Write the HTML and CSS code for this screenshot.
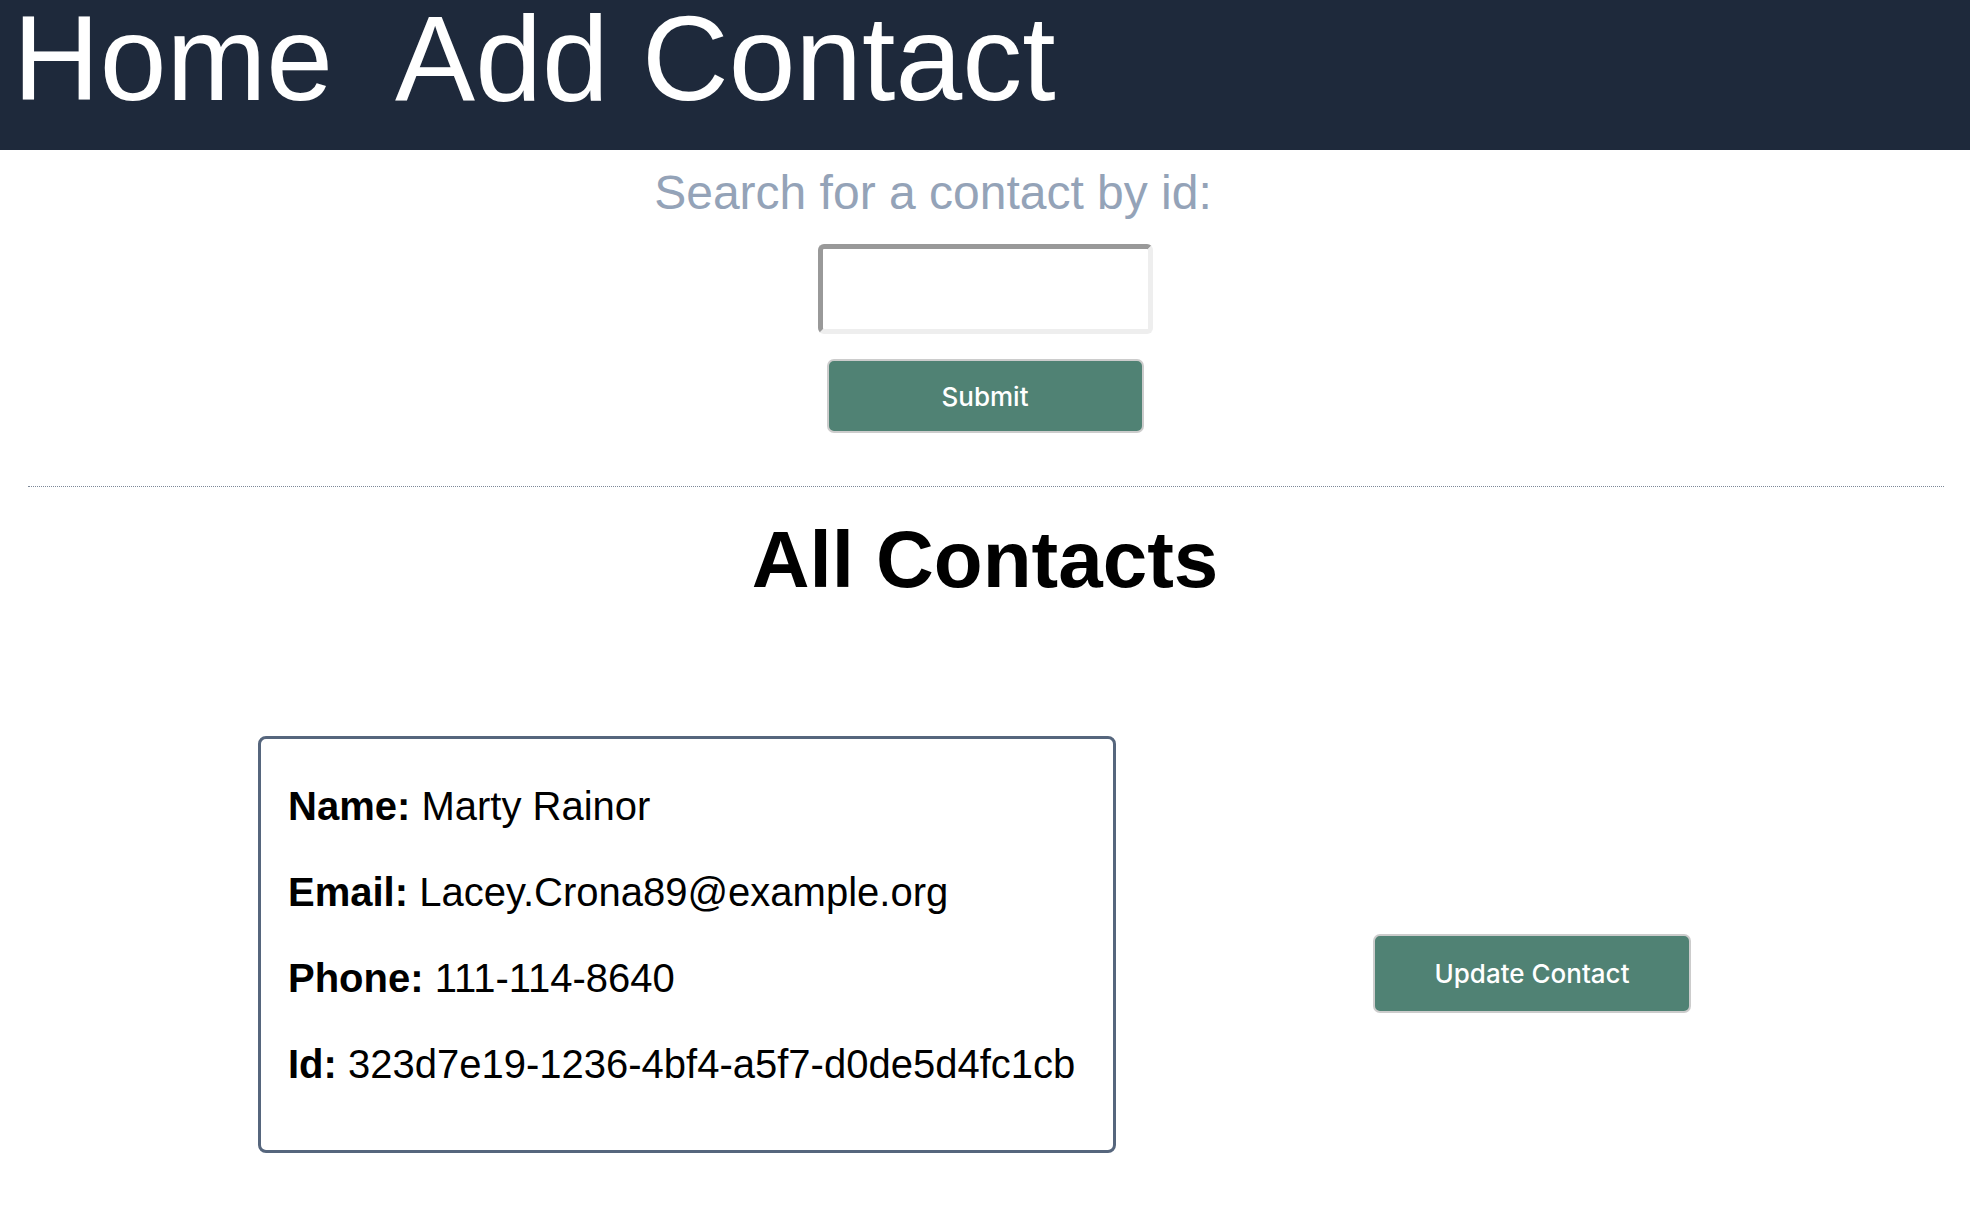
FILE: index.html
```html
<!DOCTYPE html>
<html lang="en">
<head>
<meta charset="utf-8">
<title>Contacts</title>
<link rel="stylesheet" href="styles.css">
</head>
<body>
<header class="topbar">
  <nav class="nav">
    <a class="nav-link" href="#">Home</a>
    <a class="nav-link" href="#">Add Contact</a>
  </nav>
</header>
<main class="page">
  <form class="search">
    <label class="search-label" for="contact-id">Search for a contact by id:</label>
    <input class="search-input" id="contact-id" type="text">
    <button class="btn btn-submit" type="button">Submit</button>
  </form>
  <hr class="divider">
  <h1 class="title">All Contacts</h1>
  <section class="contact-row">
    <div class="card">
      <p class="field"><b>Name:</b> Marty Rainor</p>
      <p class="field"><b>Email:</b> Lacey.Crona89@example.org</p>
      <p class="field"><b>Phone:</b> 111-114-8640</p>
      <p class="field"><b>Id:</b> 323d7e19-1236-4bf4-a5f7-d0de5d4fc1cb</p>
    </div>
    <button class="btn btn-update" type="button">Update Contact</button>
  </section>
</main>
</body>
</html>
```
FILE: styles.css
```css
* { box-sizing: border-box; }
html, body { margin: 0; padding: 0; background: #ffffff; }
body { font-family: "Liberation Sans", Arial, Helvetica, sans-serif; color: #000; }

.topbar {
  background: #1e293b;
  height: 150px;
  overflow: hidden;
}
.nav {
  display: flex;
  gap: 62px;
  padding-left: 13px;
  padding-top: 6px;
}
.nav-link {
  color: #ffffff;
  text-decoration: none;
  font-size: 120px;
  line-height: 105px;
}

.page { display: flex; flex-direction: column; }

.search {
  display: flex;
  flex-direction: column;
  align-items: center;
}
.search-label {
  margin-top: 15px;
  font-size: 48px;
  line-height: 55px;
  color: #94a3b8;
  padding-right: 104px;
}
.search-input {
  margin-top: 24px;
  width: 335px;
  height: 90px;
  border-style: solid;
  border-width: 5px;
  border-color: #999999 #eeeeee #eeeeee #999999;
  border-radius: 6px;
  background: #fff;
  outline: none;
}
.btn {
  font-family: Inter, "Noto Sans", sans-serif;
  font-weight: 500;
  color: #ffffff;
  background: #508274;
  border: 2px solid #cccccc;
  border-radius: 7px;
  font-size: 26px;
  cursor: pointer;
}
.btn-submit {
  margin-top: 25px;
  width: 317px;
  height: 74px;
}

.divider {
  margin: 53px 26px 0 28px;
  border: 0;
  border-top: 1px dotted #7d8898;
  height: 0;
}

.title {
  margin: 27px 0 0;
  font-size: 80px;
  line-height: 92px;
  font-weight: 700;
  text-align: center;
}

.contact-row {
  display: flex;
  align-items: flex-start;
  gap: 257px;
  padding-left: 258px;
  margin-top: 130px;
}
.card {
  width: 858px;
  height: 417px;
  border: 3px solid #56667d;
  border-radius: 8px;
  padding: 44px 24px 0 27px;
  display: flex;
  flex-direction: column;
  gap: 40px;
}
.field {
  margin: 0;
  font-size: 40px;
  line-height: 46px;
  white-space: nowrap;
}
.btn-update {
  margin-top: 198px;
  width: 318px;
  height: 79px;
}
```
